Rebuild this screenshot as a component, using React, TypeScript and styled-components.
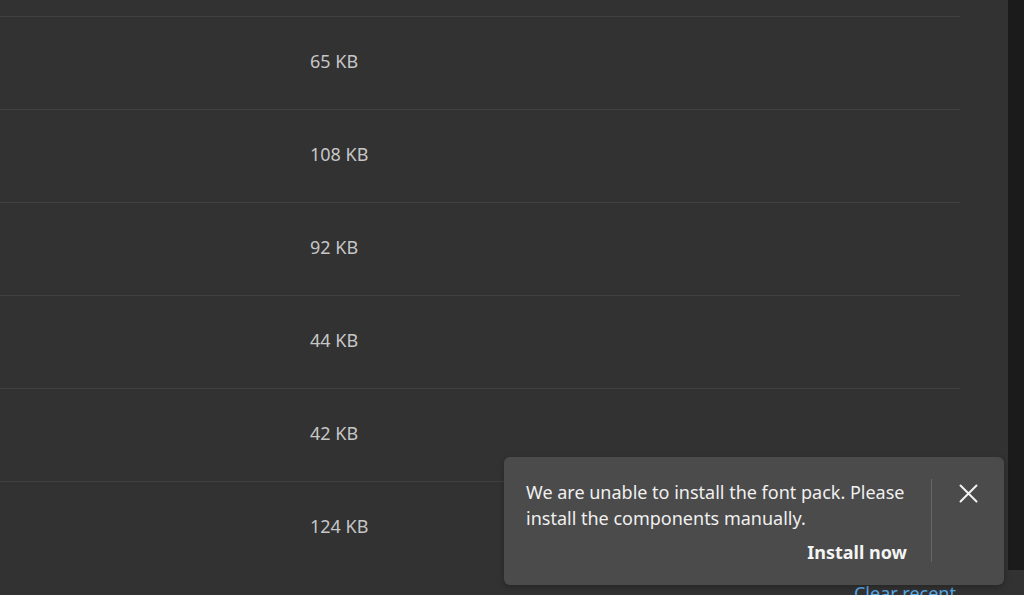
import React from "react";
import styled, { createGlobalStyle } from "styled-components";

const GlobalStyle = createGlobalStyle`
  html, body {
    margin: 0;
    padding: 0;
    background: #323232;
    overflow: hidden;
  }
  body {
    font-family: "Noto Sans", "Open Sans", "DejaVu Sans", sans-serif;
  }
`;

const Page = styled.div`
  position: relative;
  display: flex;
  width: 1024px;
  height: 595px;
  overflow: hidden;
  background: #323232;
`;

const Main = styled.div`
  flex: 1;
  display: flex;
  flex-direction: column;
  padding-top: 16px;
`;

const List = styled.div`
  width: 960px;
  display: flex;
  flex-direction: column;
`;

const Row = styled.div`
  display: flex;
  align-items: center;
  height: 92px;
  border-top: 1px solid #414141;
`;

const SizeCell = styled.span`
  margin-left: 310px;
  margin-top: -5px;
  font-size: 18px;
  color: #c6c6c6;
`;

const Footer = styled.div`
  width: 960px;
  display: flex;
  justify-content: flex-end;
  padding-top: 7px;
`;

const ClearLink = styled.a`
  margin-right: 4px;
  font-size: 18px;
  color: #5aa9e6;
  text-decoration: none;
  cursor: pointer;
`;

const ScrollTrack = styled.div`
  width: 16px;
  height: 570px;
  background: #1b1b1b;
`;

const Toast = styled.div`
  position: absolute;
  left: 504px;
  top: 457px;
  width: 500px;
  height: 128px;
  box-sizing: border-box;
  display: flex;
  padding: 22px 0 20px 22px;
  background: #4b4b4b;
  border-radius: 6px;
  box-shadow: 0 2px 6px rgba(0, 0, 0, 0.25);
`;

const ToastBody = styled.div`
  width: 385px;
  display: flex;
  flex-direction: column;
`;

const Message = styled.p`
  margin: 0;
  font-size: 18px;
  line-height: 26px;
  color: #f0f0f0;
`;

const ActionButton = styled.button`
  align-self: flex-end;
  margin-top: 8px;
  margin-right: 4px;
  padding: 0;
  border: none;
  background: transparent;
  font-family: inherit;
  font-size: 18px;
  font-weight: 700;
  line-height: 26px;
  color: #f4f4f4;
  cursor: pointer;
`;

const Divider = styled.div`
  width: 1px;
  margin: 0 0 3px 20px;
  background: #666666;
`;

const CloseButton = styled.button`
  width: 72px;
  height: 28px;
  display: flex;
  justify-content: center;
  align-items: center;
  padding: 0;
  border: none;
  background: transparent;
  cursor: pointer;
`;

const sizes = ["65 KB", "108 KB", "92 KB", "44 KB", "42 KB", "124 KB"];

const App: React.FC = () => {
  return (
    <>
      <GlobalStyle />
      <Page>
        <Main>
          <List>
            {sizes.map((s) => (
              <Row key={s}>
                <SizeCell>{s}</SizeCell>
              </Row>
            ))}
          </List>
          <Footer>
            <ClearLink>Clear recent</ClearLink>
          </Footer>
        </Main>
        <ScrollTrack />

        <Toast role="alert">
          <ToastBody>
            <Message>
              We are unable to install the font pack. Please install the
              components manually.
            </Message>
            <ActionButton>Install now</ActionButton>
          </ToastBody>
          <Divider />
          <CloseButton aria-label="Close">
            <svg width="19" height="19" viewBox="0 0 19 19">
              <path
                d="M1.5 1.5 L17.5 17.5 M17.5 1.5 L1.5 17.5"
                stroke="#f2f2f2"
                strokeWidth="2"
                strokeLinecap="round"
              />
            </svg>
          </CloseButton>
        </Toast>
      </Page>
    </>
  );
};

export default App;
